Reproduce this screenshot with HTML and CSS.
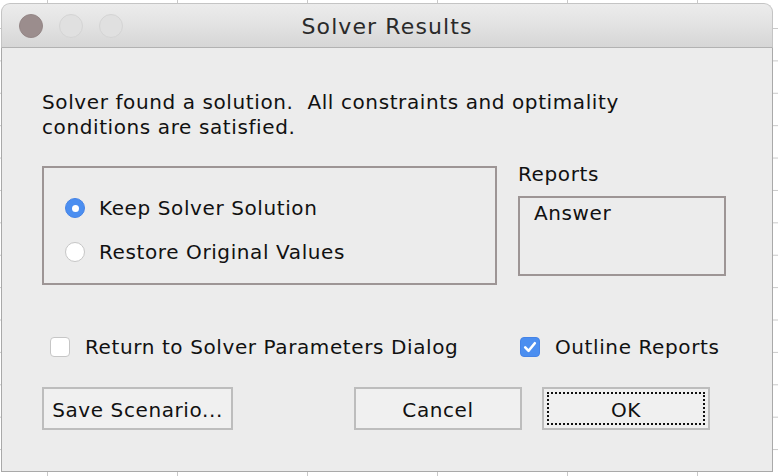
FILE: index.html
```html
<!DOCTYPE html>
<html>
<head>
<meta charset="utf-8">
<link rel="stylesheet" href="styles.css">
</head>
<body>
<div class="window">
  <div class="titlebar">
    <div class="lights">
      <span class="light close"></span>
      <span class="light"></span>
      <span class="light"></span>
    </div>
    <div class="title">Solver Results</div>
  </div>
  <div class="content">
    <p class="message">Solver found a solution.&nbsp; All constraints and optimality<br>conditions are satisfied.</p>
    <div class="row-top">
      <div class="group">
        <div class="radio-row">
          <span class="radio checked"></span>
          <span class="label">Keep Solver Solution</span>
        </div>
        <div class="radio-row">
          <span class="radio"></span>
          <span class="label">Restore Original Values</span>
        </div>
      </div>
      <div class="reports">
        <div class="reports-label">Reports</div>
        <div class="listbox">
          <div class="list-item">Answer</div>
        </div>
      </div>
    </div>
    <div class="row-checks">
      <div class="check-row first">
        <span class="checkbox"></span>
        <span class="label">Return to Solver Parameters Dialog</span>
      </div>
      <div class="check-row second">
        <span class="checkbox checked">
          <svg viewBox="0 0 20 20" width="20" height="20"><path d="M5.2 10.4 L8.6 13.8 L14.8 6.2" fill="none" stroke="#fff" stroke-width="2.6" stroke-linecap="round" stroke-linejoin="round"/></svg>
        </span>
        <span class="label">Outline Reports</span>
      </div>
    </div>
    <div class="row-buttons">
      <div class="button save">Save Scenario...</div>
      <div class="button cancel">Cancel</div>
      <div class="button ok"><span class="focus">OK</span></div>
    </div>
  </div>
</div>
</body>
</html>
```

FILE: styles.css
```css
html, body {
  margin: 0;
  padding: 0;
}

body {
  width: 778px;
  height: 476px;
  overflow: hidden;
  background-color: #ffffff;
  background-image:
    linear-gradient(to right, #c9c9c9 1px, transparent 1px),
    linear-gradient(to bottom, #c9c9c9 1px, transparent 1px);
  background-size: 130px 32.4px;
  background-position: 47px 28px;
  font-family: "DejaVu Sans", "Liberation Sans", sans-serif;
  color: #111;
}

.window {
  margin-left: 1px;
  padding-top: 3px;
  width: 772px;
}

.titlebar {
  border: 1px solid #c4c4c4;
  border-bottom: 1px solid #b2b2b2;
  border-radius: 9px 9px 0 0;
  background: linear-gradient(to bottom, #ececec 0%, #e3e3e3 45%, #d6d6d6 100%);
  display: flex;
  align-items: center;
  position: relative;
  box-sizing: border-box;
  height: 45px;
}

.lights {
  display: flex;
  gap: 16px;
  margin-left: 17px;
}

.light {
  width: 24px;
  height: 24px;
  border-radius: 50%;
  box-sizing: border-box;
  background: #e0e0e0;
  border: 1px solid #d4d4d4;
}

.light.close {
  background: #9b8d8d;
  border-color: #948686;
}

.title {
  position: absolute;
  left: 0;
  right: 0;
  top: 0;
  bottom: 0;
  display: flex;
  align-items: center;
  justify-content: center;
  font-size: 22px;
  letter-spacing: 1.1px;
  color: #2a2a2a;
  padding-top: 2px;
}

.content {
  height: 424px;
  box-sizing: border-box;
  background: #ececec;
  border-left: 1px solid #a9a9a9;
  border-right: 1px solid #a9a9a9;
  border-bottom: 1px solid #a9a9a9;
  padding: 42px 0 0 40px;
  font-size: 20px;
  letter-spacing: 0.6px;
}

.message {
  margin: 0;
  line-height: 25px;
}

.row-top {
  display: flex;
  margin-top: 26px;
}

.group {
  width: 455px;
  height: 119px;
  box-sizing: border-box;
  border: 2px solid #9d9595;
  padding: 28px 0 0 21px;
  display: flex;
  flex-direction: column;
  gap: 20px;
}

.radio-row {
  display: flex;
  align-items: center;
  height: 24px;
}

.radio {
  width: 20px;
  height: 20px;
  box-sizing: border-box;
  border-radius: 50%;
  background: #ffffff;
  border: 1px solid #c6c6c6;
  margin-right: 14px;
  display: flex;
  align-items: center;
  justify-content: center;
}

.radio.checked {
  background: #4b8ef0;
  border-color: #4583e6;
}

.radio.checked::after {
  content: "";
  width: 7px;
  height: 7px;
  border-radius: 50%;
  background: #ffffff;
}

.reports {
  margin-left: 21px;
  width: 208px;
}

.reports-label {
  line-height: 18px;
  margin-top: -1px;
}

.listbox {
  margin-top: 13px;
  height: 80px;
  box-sizing: border-box;
  border: 2px solid #9d9595;
  padding: 3px 0 0 14px;
}

.list-item {
  line-height: 24px;
}

.row-checks {
  display: flex;
  margin-top: 51px;
  height: 22px;
}

.check-row {
  display: flex;
  align-items: center;
}

.check-row.first {
  margin-left: 8px;
  width: 470px;
}

.checkbox {
  width: 20px;
  height: 20px;
  box-sizing: border-box;
  border-radius: 4px;
  background: #ffffff;
  border: 1px solid #c6c6c6;
  margin-right: 15px;
  display: flex;
}

.checkbox.checked {
  background: #4b8ef0;
  border-color: #4583e6;
}

.checkbox svg {
  margin: -1px;
}

.row-buttons {
  display: flex;
  margin-top: 29px;
}

.button {
  height: 43px;
  box-sizing: border-box;
  border: 2px solid #bdbdbd;
  background: #f0f0f0;
  display: flex;
  align-items: center;
  justify-content: center;
  padding-top: 2px;
}

.button.save {
  width: 191px;
}

.button.cancel {
  width: 168px;
  margin-left: 121px;
}

.button.ok {
  width: 168px;
  margin-left: 20px;
  padding: 3px;
}

.focus {
  flex: 1;
  align-self: stretch;
  border: 2px dotted #111;
  display: flex;
  align-items: center;
  justify-content: center;
  padding-top: 2px;
}
```
